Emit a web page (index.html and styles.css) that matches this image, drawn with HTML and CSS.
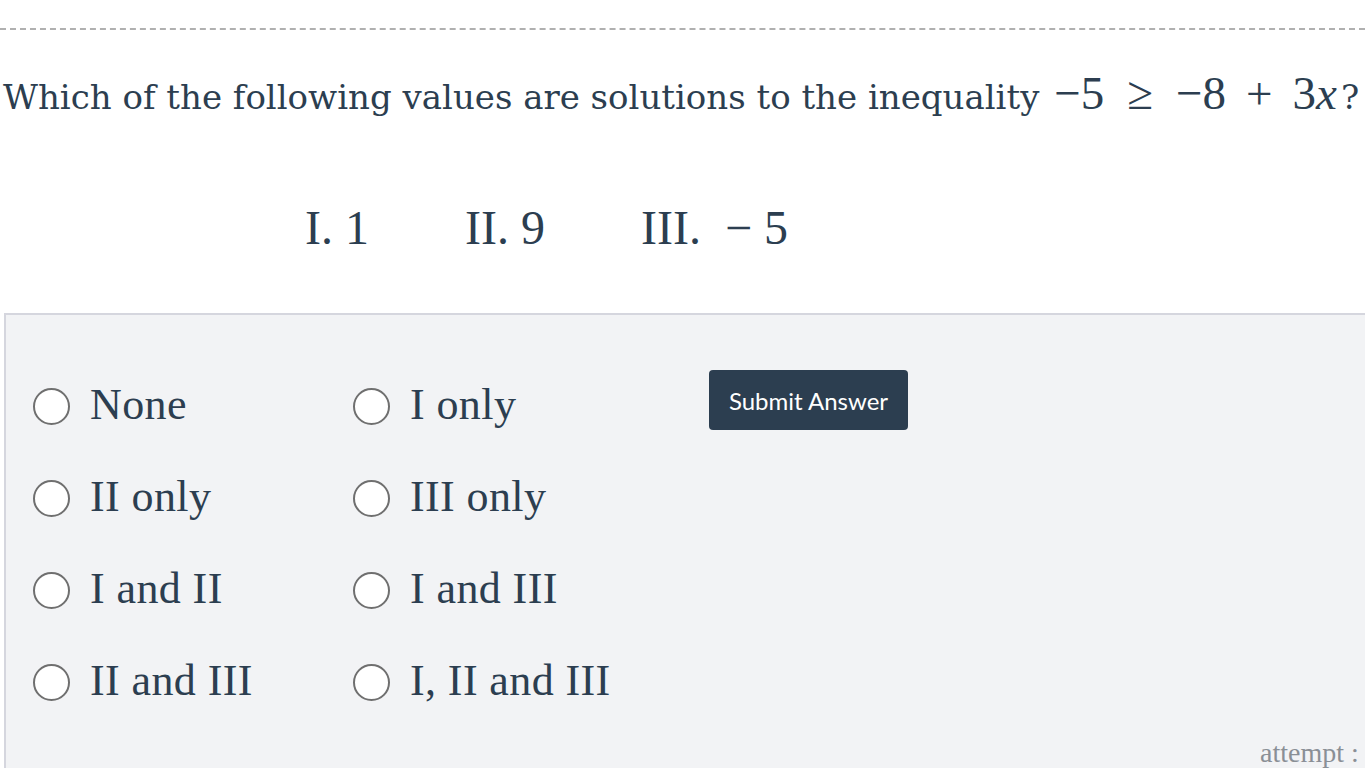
FILE: index.html
```html
<!DOCTYPE html>
<html>
<head>
<meta charset="utf-8">
<link rel="stylesheet" href="styles.css">
</head>
<body>
<div class="page">
  <div class="rule"></div>
  <p class="question">Which of the following values are solutions to the inequality <span class="math"><span class="op">−</span>5<span class="rel">≥</span><span class="op">−</span>8<span class="bin">+</span>3<i>x</i></span>?</p>
  <div class="numerals">
    <span>I. 1</span>
    <span>II. 9</span>
    <span>III.&nbsp;&nbsp;− 5</span>
  </div>
  <div class="panel">
    <div class="choices">
      <label class="choice"><span class="radio"></span><span class="txt">None</span></label>
      <label class="choice"><span class="radio"></span><span class="txt">I only</span></label>
      <button class="submit">Submit Answer</button>
      <label class="choice"><span class="radio"></span><span class="txt">II only</span></label>
      <label class="choice"><span class="radio"></span><span class="txt">III only</span></label>
      <span></span>
      <label class="choice"><span class="radio"></span><span class="txt">I and II</span></label>
      <label class="choice"><span class="radio"></span><span class="txt">I and III</span></label>
      <span></span>
      <label class="choice"><span class="radio"></span><span class="txt">II and III</span></label>
      <label class="choice"><span class="radio"></span><span class="txt">I, II and III</span></label>
      <span></span>
    </div>
    <div class="attempt">attempt :</div>
  </div>
</div>
</body>
</html>
```
FILE: styles.css
```css
html, body {
  margin: 0;
  padding: 0;
  background: #ffffff;
  overflow: hidden;
}
.page {
  width: 1365px;
  height: 768px;
  overflow: hidden;
  color: #2c3e50;
  font-family: "Liberation Serif", "DejaVu Serif", serif;
}
.rule {
  margin-top: 28px;
  height: 0;
  border-top: 2px dashed #b0b0b0;
}
.question {
  margin: 40px 0 0 3px;
  font-family: "DejaVu Serif", "Liberation Serif", serif;
  font-size: 34px;
  line-height: 46px;
  white-space: nowrap;
}
.math {
  font-family: "Liberation Serif", serif;
  font-size: 47px;
  margin-left: 4px;
}
.math i { font-style: italic; margin-right: 4px; }
.rel { margin: 0 23px; }
.bin { margin: 0 20px; }
.numerals {
  display: flex;
  gap: 96px;
  padding-left: 305px;
  margin-top: 80px;
  font-size: 48px;
  line-height: 56px;
}
.panel {
  margin-top: 57px;
  margin-left: 4px;
  height: 500px;
  background: #f2f3f5;
  border-top: 2px solid #d5d6de;
  border-left: 2px solid #d5d6de;
  position: relative;
}
.choices {
  display: grid;
  grid-template-columns: 320px 320px 200px;
  grid-auto-rows: 92px;
  padding: 45px 0 0 27px;
}
.choice {
  display: flex;
  align-items: center;
  gap: 20px;
  font-size: 44px;
  letter-spacing: 0.4px;
}
.radio {
  width: 33px;
  height: 33px;
  border: 2px solid #6f6f6f;
  border-radius: 50%;
  background: #ffffff;
  flex: none;
}
.txt {
  position: relative;
  top: -2px;
}
.submit {
  align-self: start;
  justify-self: start;
  margin-top: 10px;
  margin-left: 36px;
  width: 199px;
  height: 60px;
  background: #2c3e50;
  color: #ffffff;
  border: none;
  border-radius: 4px;
  font-family: Lato, "Liberation Sans", sans-serif;
  font-size: 24px;
  padding: 0;
}
.attempt {
  position: absolute;
  left: 1254px;
  top: 422px;
  font-size: 28px;
  color: #8a8f96;
  white-space: nowrap;
}
```
